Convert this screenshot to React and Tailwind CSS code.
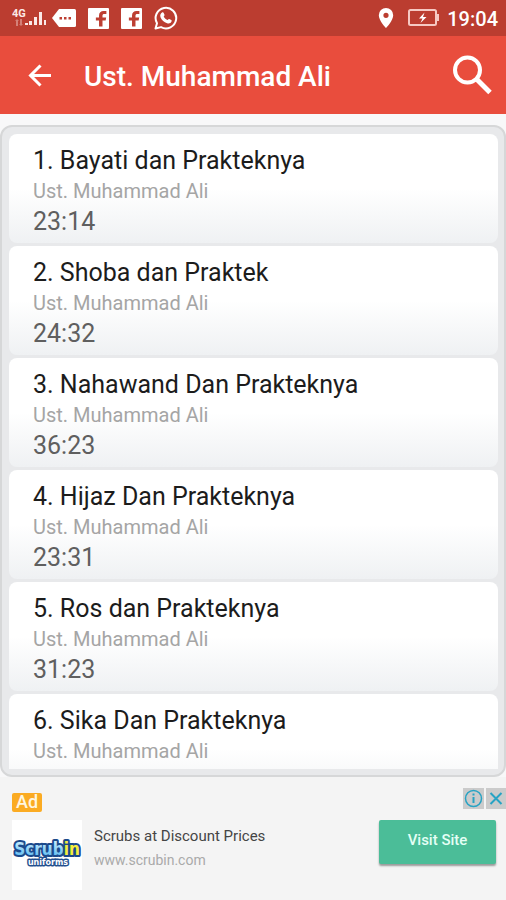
const tracks = [
  { id: 1, title: "Bayati dan Prakteknya", duration: "23:14" },
  { id: 2, title: "Shoba dan Praktek", duration: "24:32" },
  { id: 3, title: "Nahawand Dan Prakteknya", duration: "36:23" },
  { id: 4, title: "Hijaz Dan Prakteknya", duration: "23:31" },
  { id: 5, title: "Ros dan Prakteknya", duration: "31:23" },
  { id: 6, title: "Sika Dan Prakteknya", duration: "" },
];

function SignalIcon() {
  return (
    <svg viewBox="0 0 36 24" className="w-9 h-6" fill="#fbe9e7" aria-hidden="true">
      <text x="0" y="11" fontSize="11" fontWeight="700" fontFamily="Roboto, sans-serif">4G</text>
      <path d="M3 15l2-2 2 2H6v5H4v-5zM7 18h1v-5h2v5h1l-2 2z" opacity="0.4" />
      <path d="M13 17h3v2h-3zM17 15h3v4h-3zM22 11h3v8h-3zM27 6h3v13h-3zM32 14h2v5h-2z" />
    </svg>
  );
}

function MessageIcon() {
  return (
    <svg viewBox="0 0 24 18" className="w-6 h-[18px]" aria-hidden="true">
      <path d="M7 0h15.500Q24 0 24 1.500v15Q24 18 22.500 18H7L0 9z" fill="#fff" />
      <path d="M7.500 8h2.500v2.500H7.500zM12 8h2.500v2.500H12zM16.500 8H19v2.500h-2.500z" fill="#bd3f32" />
    </svg>
  );
}

function FacebookIcon() {
  return (
    <svg viewBox="0 0 20 20" className="size-[21px]" aria-hidden="true">
      <rect width="20" height="20" rx="1" fill="#fff" />
      <path
        d="M10.500 17.500v-5.500H7.500V9h3V7.200c0-2.900 1.700-4.400 4.300-4.400h2.700v3h-1.900c-1.300 0-1.800.6-1.800 1.700V9h3.500l-.5 3h-3v5.500z"
        fill="#bd3f32"
      />
    </svg>
  );
}

function WhatsappIcon() {
  return (
    <svg viewBox="0 0 24 24" className="size-6" fill="none" aria-hidden="true">
      <path
        d="M1.500 22.500l1.500-5.300A10.300 10.300 0 1 1 7 21.100z"
        stroke="#fff"
        strokeWidth="2"
        strokeLinejoin="round"
      />
      <path
        d="M8.300 6.300c.5-.3 1-.2 1.300.4l.9 2c.2.500-.2 1-.8 1.700.9 1.700 2.200 2.900 4 3.700.6-.7 1-1.300 1.500-1.100l2.100 1.100c.5.200.4 1 .1 1.700-.7 1.500-2.500 2-4.300 1.400-3.200-1-5.200-3-6.500-5.800-.9-2-.1-4.200 1.700-5.100z"
        fill="#fff"
      />
    </svg>
  );
}

function StatusBar() {
  return (
    <div className="flex h-9 items-center bg-[#bb3d30] pl-3 pr-2 text-white">
      <SignalIcon />
      <div className="ml-1 flex items-center gap-3">
        <MessageIcon />
        <FacebookIcon />
        <FacebookIcon />
        <WhatsappIcon />
      </div>
      <div className="ml-auto flex items-center">
        <svg viewBox="0 0 16 20" className="h-5 w-4" aria-hidden="true">
          <path
            d="M8 0a7.200 7.200 0 0 0-7.200 7.200C.8 12.500 8 20 8 20s7.200-7.500 7.200-12.800A7.200 7.200 0 0 0 8 0zm0 4.700a2.600 2.600 0 1 1 0 5.200 2.600 2.600 0 0 1 0-5.200z"
            fill="#fff"
          />
        </svg>
        <svg viewBox="0 0 31 18" className="ml-3.5 h-[18px] w-[31px]" aria-hidden="true">
          <rect x="1" y="1" width="27" height="15" rx="1.500" fill="none" stroke="#f6c9c3" strokeWidth="2" />
          <path d="M29 5h2v7h-2z" fill="#f6c9c3" />
          <path d="M16.500 3.500L11 9.500h3.500L12.500 14l6-6h-3.500z" fill="#fff" />
        </svg>
        <span className="ml-2 pt-0.5 text-xl font-medium leading-6">19:04</span>
      </div>
    </div>
  );
}

function AppBar() {
  return (
    <header className="flex h-[78px] items-center bg-[#e94d3d] pl-7 pr-3.5 text-white">
      <button type="button" aria-label="Back">
        <svg viewBox="0 0 24 24" className="size-6" fill="none" stroke="#fff" strokeWidth="3" aria-hidden="true">
          <path d="M23 12.500H3M12.500 2.500l-10 10 10 10" />
        </svg>
      </button>
      <h1 className="ml-8 pt-1 text-[28px] font-medium leading-8">Ust. Muhammad Ali</h1>
      <button type="button" aria-label="Search" className="ml-auto">
        <svg viewBox="0 0 40 40" className="size-10" fill="none" stroke="#fff" aria-hidden="true">
          <circle cx="15.500" cy="15" r="12.500" strokeWidth="4" />
          <path d="M24.500 24l13.500 13.500" strokeWidth="5" />
        </svg>
      </button>
    </header>
  );
}

function TrackCard({ track }) {
  return (
    <li className="shrink-0 rounded-lg bg-linear-to-b from-white from-50% to-[#eff1f3] px-6 pt-[11px] pb-1">
      <h2 className="text-[25px] leading-8 text-[#1c1c1c]">
        {track.id}. {track.title}
      </h2>
      <p className="text-xl leading-7 text-[#a5a5a5]">Ust. Muhammad Ali</p>
      <p className="h-[34px] text-[25px] leading-[34px] text-[#5f5f5f]">{track.duration}</p>
    </li>
  );
}

function AdBanner() {
  return (
    <aside className="h-[123px] shrink-0 bg-[#f4f4f4] pl-3">
      <div className="flex items-start justify-between pt-[11px]">
        <span className="mt-[5px] h-[19px] rounded-xs bg-[#fbab22] px-1 text-lg font-medium leading-[18px] text-[#fff6e0]">Ad</span>
        <div className="flex gap-0.5">
          <button type="button" aria-label="Ad information" className="bg-[#cbcbcb] p-px">
            <svg viewBox="0 0 19 19" className="size-[19px]" fill="none" stroke="#27a3c4" strokeWidth="1.500" aria-hidden="true">
              <circle cx="9.500" cy="9.500" r="8" />
              <path d="M9.500 8v6M9.500 4.500v2" strokeWidth="2" />
            </svg>
          </button>
          <button type="button" aria-label="Close ad" className="bg-[#cbcbcb] p-px">
            <svg viewBox="0 0 18 19" className="h-[19px] w-[18px]" stroke="#27a3c4" strokeWidth="2" aria-hidden="true">
              <path d="M3.500 4l11 11M14.500 4l-11 11" />
            </svg>
          </button>
        </div>
      </div>
      <div className="mt-2 flex items-start pr-2.5">
        <svg viewBox="0 0 70 70" className="size-[70px] bg-white" role="img" aria-label="Scrubin uniforms">
          <defs>
            <linearGradient id="scrub" x1="0" y1="0" x2="0" y2="1">
              <stop offset="0" stopColor="#d8f4ff" />
              <stop offset="1" stopColor="#4fb4ee" />
            </linearGradient>
          </defs>
          <g fontWeight="700" textAnchor="middle" paintOrder="stroke" strokeLinejoin="round">
            <text
              x="35"
              y="35"
              fontSize="17"
              fontFamily="'DejaVu Sans Condensed', 'DejaVu Sans', sans-serif"
              fill="url(#scrub)"
              stroke="#1c4a8c"
              strokeWidth="4"
            >
              Scrub<tspan fill="#f5ee3c">in</tspan>
            </text>
            <text
              x="36"
              y="45"
              fontSize="8"
              fontFamily="'DejaVu Sans', sans-serif"
              fill="#fff"
              stroke="#23508f"
              strokeWidth="3"
            >
              uniforms
            </text>
          </g>
        </svg>
        <div className="ml-3 flex-1 pt-1.5">
          <p className="text-[15px] leading-5 text-[#454545]">Scrubs at Discount Prices</p>
          <p className="mt-1 text-sm leading-5 text-[#aaaaaa]">www.scrubin.com</p>
        </div>
        <button
          type="button"
          className="h-11 w-[117px] rounded-xs bg-[#4bbd98] pb-1 text-[15px] font-medium text-[#e4fff5] shadow-[0_2px_2px_#9a9a9a]"
        >
          Visit Site
        </button>
      </div>
    </aside>
  );
}

export default function App() {
  return (
    <div
      className="flex h-screen flex-col overflow-hidden bg-[#f8f8f9]"
      style={{ fontFamily: "Roboto, 'Liberation Sans', sans-serif" }}
    >
      <StatusBar />
      <AppBar />
      <main className="mt-[11px] flex min-h-0 flex-1 flex-col rounded-xl border-2 border-[#d6d7d8] bg-[#e8e9eb] pl-[7px] pr-1.5 pt-[7px] pb-1.5">
        <ul className="flex min-h-0 flex-col gap-[3px] overflow-hidden">
          {tracks.map((track) => (
            <TrackCard key={track.id} track={track} />
          ))}
        </ul>
      </main>
      <AdBanner />
    </div>
  );
}
